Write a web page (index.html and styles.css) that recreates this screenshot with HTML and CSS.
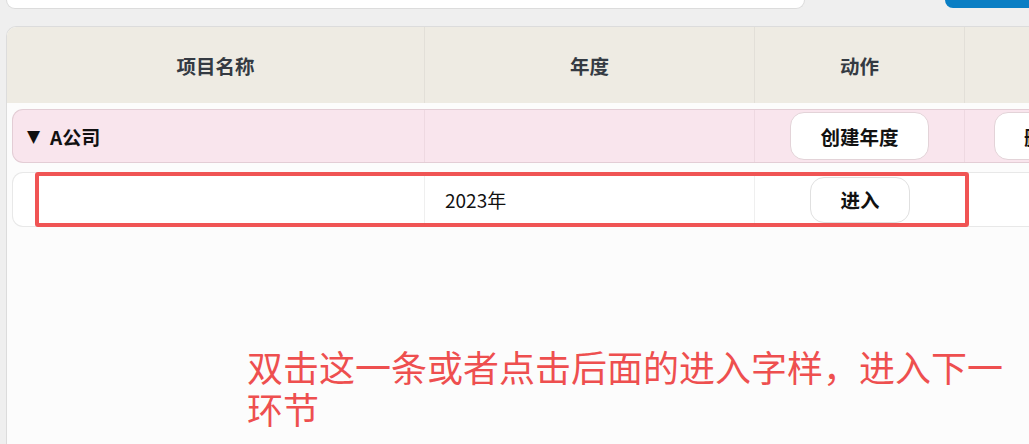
FILE: index.html
```html
<!DOCTYPE html>
<html lang="zh-CN">
<head>
  <meta charset="UTF-8" />
  <meta name="viewport" content="width=device-width, initial-scale=1.0"/>
  <title>项目年度</title>
  <link rel="stylesheet" href="styles.css">
</head>
<body>

  <!-- Toolbar (scrolled, only the bottom edge shows) -->
  <div class="topbar">
    <div class="search"></div>
    <button class="primary"></button>
  </div>

  <!-- Project table -->
  <section class="panel">
    <div class="thead">
      <div class="th">项目名称</div>
      <div class="th">年度</div>
      <div class="th">动作</div>
      <div class="th"></div>
    </div>

    <div class="row company">
      <div class="td name"><span class="caret">▼</span>A公司</div>
      <div class="td"></div>
      <div class="td action"><button class="row-btn tall">创建年度</button></div>
      <div class="td extra"><button class="row-btn tall">删除</button></div>
    </div>

    <div class="row year">
      <div class="td"></div>
      <div class="td label">2023年</div>
      <div class="td action"><button class="row-btn">进入</button></div>
      <div class="td"></div>
    </div>
  </section>

  <!-- Annotation overlay -->
  <div class="mark"></div>
  <p class="note">双击这一条或者点击后面的进入字样，进入下一环节</p>

</body>
</html>
```

FILE: styles.css
```css
body {
  margin: 0;
  width: 1029px;
  height: 444px;
  overflow: hidden;
  background: #efefef;
  font-family: "Noto Sans CJK SC", "Noto Sans", sans-serif;
  position: relative;
}

.topbar {
  display: flex;
  height: 9px;
  padding-left: 6px;
}

.search {
  flex-shrink: 0;
  box-sizing: border-box;
  width: 799px;
  height: 9px;
  background: white;
  border: 1px solid #dcdcdc;
  border-top: none;
  border-radius: 0 0 14px 14px;
}

.primary {
  flex-shrink: 0;
  margin-left: 140px;
  width: 120px;
  height: 8px;
  border: none;
  padding: 0;
  background: #0a7ec4;
  border-radius: 0 0 0 14px;
}

.panel {
  box-sizing: border-box;
  margin: 17px 0 0 6px;
  width: 1100px;
  height: 430px;
  background: #fcfcfc;
  border: 1px solid #dcdcdc;
  border-right: none;
  border-radius: 10px 0 0 0;
}

.thead {
  display: grid;
  grid-template-columns: 418px 330px 210px 1fr;
  height: 76px;
  background: #eeebe3;
  border-radius: 9px 0 0 0;
}

.th {
  display: flex;
  align-items: center;
  justify-content: center;
  border-right: 1px solid #e2dfd8;
  font-size: 19.5px;
  font-weight: bold;
  color: #343a42;
}

.row {
  box-sizing: border-box;
  display: grid;
  grid-template-columns: 412px 330px 210px 1fr;
  margin-left: 5px;
  border: 1px solid #e6e6e6;
  border-right: none;
  border-radius: 11px 0 0 11px;
}

.company {
  height: 54px;
  margin-top: 6px;
  background: #f9e5ed;
  border-color: #e3cdd5;
}

.year {
  height: 55px;
  margin-top: 9px;
  background: white;
  border-color: #e8e8e8;
}

.td {
  display: flex;
  align-items: center;
  font-size: 19px;
  color: #111;
}

.company .td {
  border-right: 1px solid #eed9e1;
}

.year .td:nth-child(1),
.year .td:nth-child(2) {
  border-right: 1px solid #efefef;
}

.name {
  padding-left: 14px;
  font-weight: bold;
}

.caret {
  font-family: "DejaVu Sans", sans-serif;
  font-size: 17px;
  margin-right: 10px;
}

.label {
  padding-left: 20px;
}

.action {
  justify-content: center;
}

.extra {
  padding-left: 29px;
}

.row-btn {
  height: 46px;
  padding: 0 29px;
  background: white;
  border: 1px solid #e0e0e0;
  border-radius: 14px;
  font-family: inherit;
  font-size: 19.5px;
  font-weight: bold;
  color: #111;
}

.row-btn.tall {
  height: 48px;
}

.company .row-btn {
  border-color: #e3d3d8;
}

.mark {
  position: absolute;
  left: 35px;
  top: 172px;
  box-sizing: border-box;
  width: 934px;
  height: 55px;
  border: 4px solid #f05454;
  border-radius: 3px;
}

.note {
  position: absolute;
  left: 247px;
  top: 345px;
  width: 780px;
  margin: 0;
  font-size: 36px;
  line-height: 42px;
  color: #ee4f4f;
}
```
